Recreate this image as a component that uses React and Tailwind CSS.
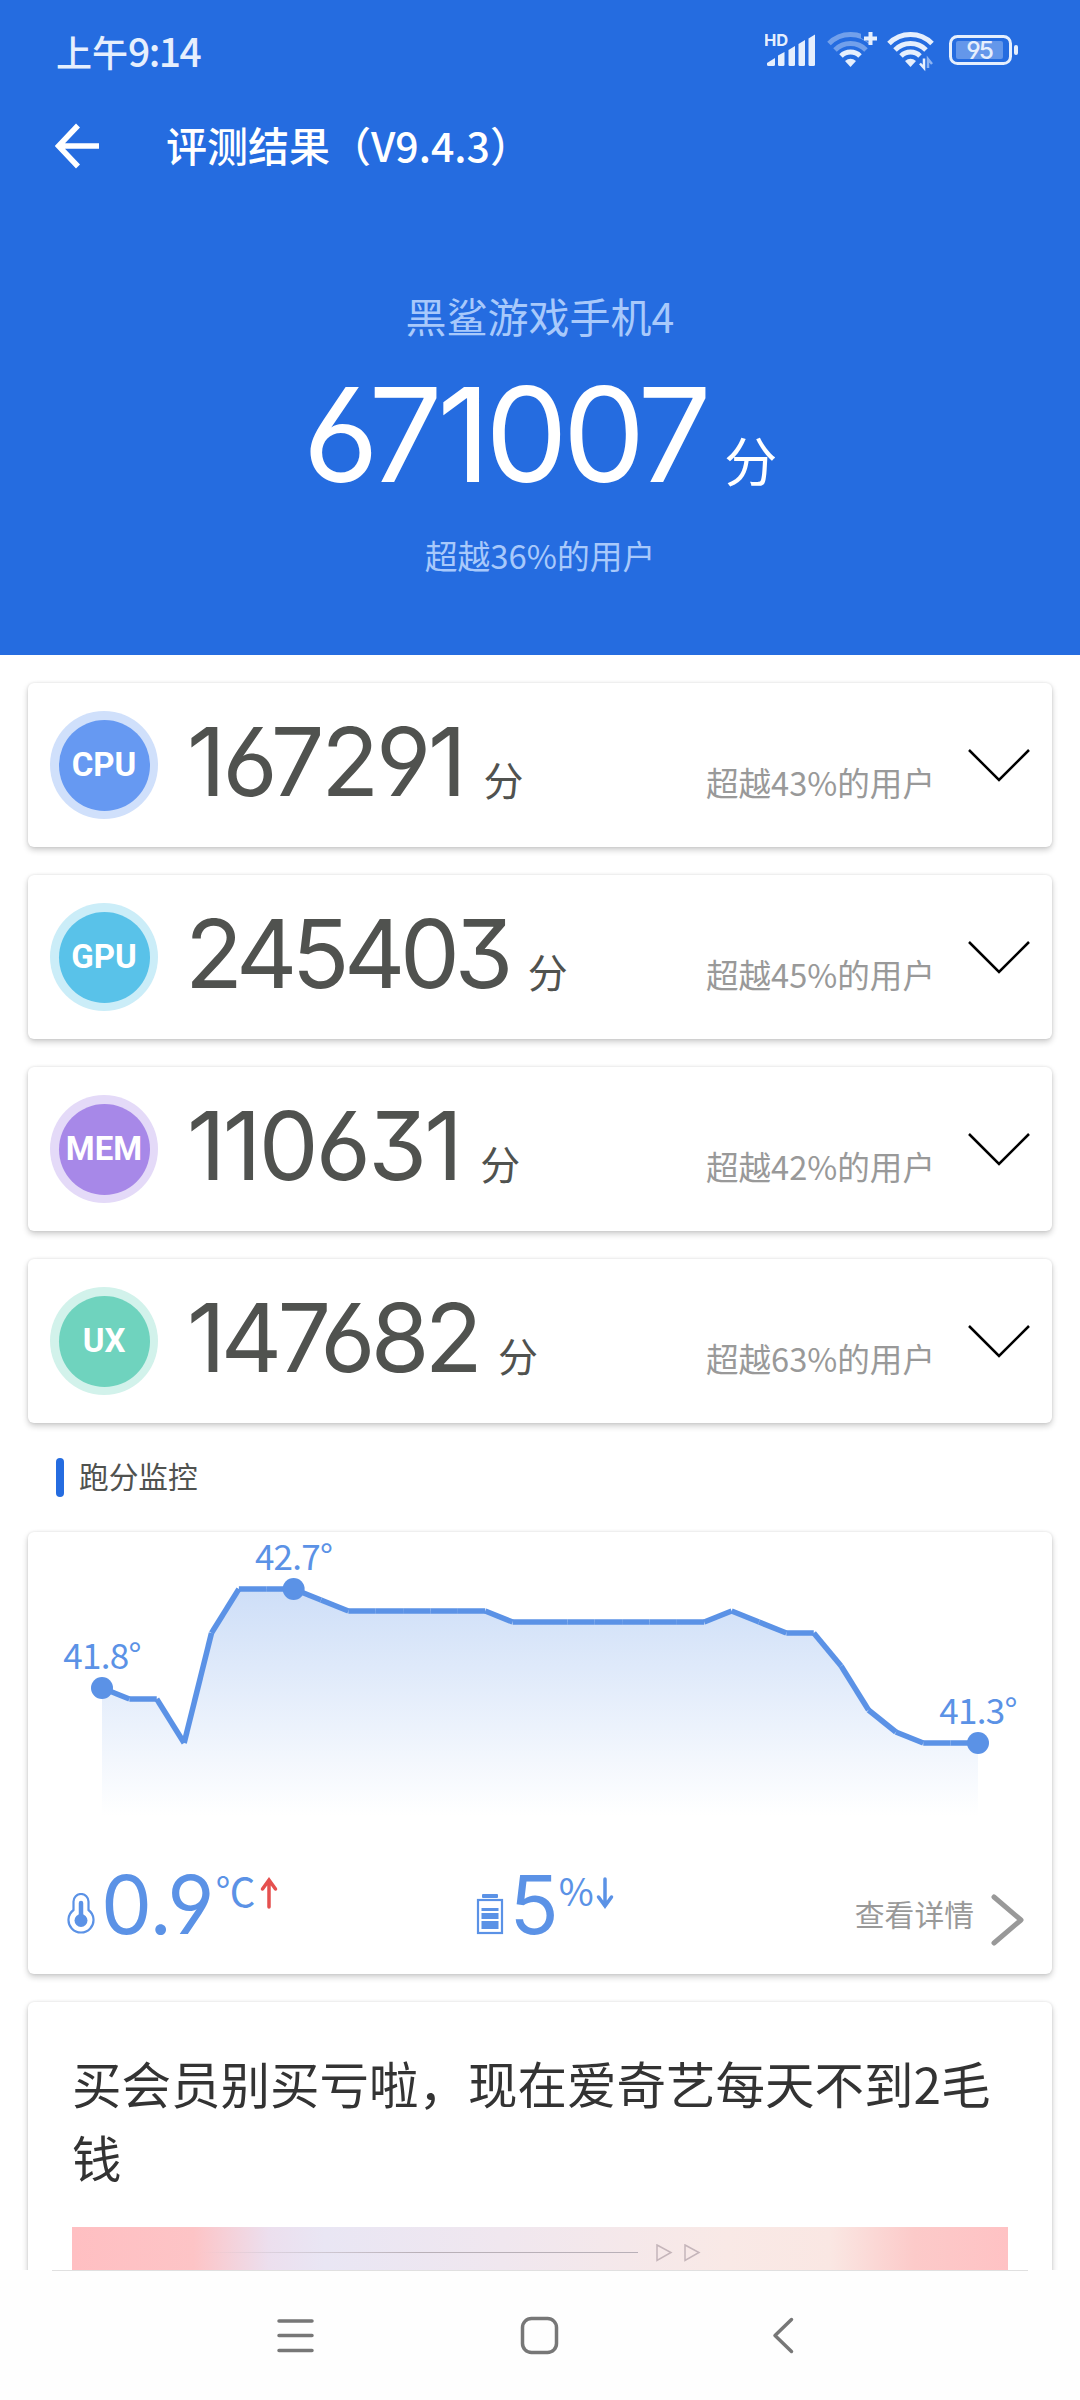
const temps = [
  41.8, 41.7, 41.7, 41.3, 42.3, 42.7, 42.7, 42.7, 42.6, 42.5, 42.5, 42.5, 42.5, 42.5, 42.5, 42.4, 42.4,
  42.4, 42.4, 42.4, 42.4, 42.4, 42.4, 42.5, 42.4, 42.3, 42.3, 42.0, 41.6, 41.4, 41.3, 41.3, 41.3,
];

const scores = [
  { label: 'CPU', score: 167291, percent: 43, ring: 'bg-[#d0e0fb]', fill: 'bg-[#6699f2]', spacing: 'tracking-[-3.2px]' },
  { label: 'GPU', score: 245403, percent: 45, ring: 'bg-[#cbedf8]', fill: 'bg-[#59c2e9]', spacing: 'tracking-[-5.5px] -ml-[2px]' },
  { label: 'MEM', score: 110631, percent: 42, ring: 'bg-[#e4daf8]', fill: 'bg-[#a788e8]', spacing: 'tracking-[-2.8px]' },
  { label: 'UX', score: 147682, percent: 63, ring: 'bg-[#d2f2eb]', fill: 'bg-[#6fd3be]', spacing: 'tracking-[-4.8px]' },
];

// Inter with the open 6 / 9 and the flat-top 3
const digitFont = "font-['Inter','Noto_Sans_CJK_SC',sans-serif] [font-feature-settings:'cv03','cv04','cv09']";

const Card = ({ className = '', children }) => (
  <div className={`mx-7 rounded-md bg-white shadow-[0_3px_6px_rgba(0,0,0,0.2),0_0_3px_rgba(0,0,0,0.1)] ${className}`}>
    {children}
  </div>
);

const Wifi = ({ x, dim }) => (
  <g transform={`translate(${x} 0)`} fill="none" stroke="#e6effd" strokeWidth="5">
    <path d="M-21.5 19.500 A30 30 0 0 1 21.500 19.500" opacity={dim ? 0.4 : 1} />
    <path d="M-15.500 26 A22 22 0 0 1 15.500 26" opacity={dim ? 0.4 : 1} />
    <path d="M-9.500 32 A13.500 13.500 0 0 1 9.500 32" />
    <path d="M-5.500 37 Q0 32.500 5.500 37 L0 43 Z" fill="#e6effd" stroke="none" />
  </g>
);

const StatusIcons = () => (
  <svg width="256" height="52" viewBox="0 0 256 52">
    <text x="-1" y="22" fill="#e6effd" className="font-['Inter',sans-serif] text-[16.5px] font-bold">HD</text>
    <g fill="#e6effd">
      <path d="M2 39 L10 34 V40.500 Q10 42 8.500 42 H3.500 Q2 42 2 40.500 Z" />
      <path d="M13 31.500 L19.500 28 V40.500 Q19.500 42 18 42 H14.500 Q13 42 13 40.500 Z" />
      <path d="M23.500 26 L30 22 V40.500 Q30 42 28.500 42 H25 Q23.500 42 23.500 40.500 Z" />
      <path d="M33.500 20 L40 16 V40.500 Q40 42 38.500 42 H35 Q33.500 42 33.500 40.500 Z" />
      <path d="M43.500 14.500 L50 10.500 V40.500 Q50 42 48.500 42 H45 Q43.500 42 43.500 40.500 Z" />
    </g>
    <Wifi x={85.5} dim />
    <path d="M96 8 H116 V25 L96 14 Z" fill="#256ce0" />
    <path d="M105.500 8 V21 M99 14.500 H112" stroke="#e6effd" strokeWidth="4" />
    <Wifi x={145.5} />
    <path d="M152 46 V34 H170 V46 Z" fill="#256ce0" />
    <path d="M159 34.500 V44 L155 39.500" fill="none" stroke="#e6effd" strokeWidth="2.500" />
    <path d="M163 44 V35 L167 40" fill="none" stroke="#8db4f2" strokeWidth="2.500" />
    <rect x="185.500" y="12.500" width="60" height="27" rx="7" fill="none" stroke="#e6effd" strokeWidth="3" />
    <rect x="191" y="17" width="47" height="18" rx="2" fill="#6497ea" />
    <rect x="249" y="21" width="4" height="10" rx="2" fill="#e6effd" />
    <text x="214" y="35" textAnchor="middle" fill="#e6effd" className="font-['Inter',sans-serif] text-[24.5px] font-medium tracking-[-2px] [font-feature-settings:'cv04']">95</text>
  </svg>
);

const ScoreCard = ({ item }) => (
  <Card className="flex h-[164px] items-center pl-[22px] pr-[21px]">
    <div className={`flex size-[108px] shrink-0 items-center justify-center rounded-full ${item.ring}`}>
      <div className={`flex size-[91px] items-center justify-center rounded-full font-['Roboto',sans-serif] text-[33px] font-bold text-white ${item.fill}`}>
        {item.label}
      </div>
    </div>
    <div className="ml-[29px] mt-[31px] flex flex-1 items-baseline self-start leading-none text-[#50524f]">
      <span className={`text-[95px] font-[370] ${item.spacing} ${digitFont}`}>{item.score}</span>
      <span className="ml-5 text-[40px]">分</span>
      <span className="ml-auto text-[32.6px] text-[#999]">超越{item.percent}%的用户</span>
    </div>
    <svg className="ml-[32px]" width="64" height="34" viewBox="0 0 64 34" fill="none" stroke="#000" strokeWidth="2.500">
      <path d="M2 2 L32 32 L62 2" />
    </svg>
  </Card>
);

const TempChart = () => {
  const points = temps.map((t, i) => [74 + i * 27.375, 156 - (t - 41.8) * 110]);
  const line = points.map(([x, y]) => `${x} ${y}`).join(' L');
  const marks = [
    { i: 0, label: '41.8°' },
    { i: 7, label: '42.7°' },
    { i: 32, label: '41.3°' },
  ];

  return (
    <svg className="block" width="1024" height="300" viewBox="0 0 1024 300">
      <defs>
        <linearGradient id="tempFill" x1="0" y1="57" x2="0" y2="284" gradientUnits="userSpaceOnUse">
          <stop offset="0" stopColor="#5b92e6" stopOpacity="0.3" />
          <stop offset="1" stopColor="#5b92e6" stopOpacity="0" />
        </linearGradient>
      </defs>
      <path d={`M${line} L950 284 L74 284 Z`} fill="url(#tempFill)" />
      {points.slice(1).map(([x, y], i) => (
        <line key={i} x1={points[i][0]} y1={points[i][1]} x2={x} y2={y} stroke="#5b92e6" strokeWidth="5.500" />
      ))}
      {marks.map(({ i, label }) => (
        <g key={i} fill="#5b92e6">
          <circle cx={points[i][0]} cy={points[i][1]} r="11" />
          <text x={points[i][0]} y={points[i][1] - 19} textAnchor="middle" className="text-[35px] tracking-[-0.7px]">
            {label}
          </text>
        </g>
      ))}
    </svg>
  );
};

const ThermometerIcon = () => (
  <svg className="mb-[17px]" width="28" height="42" viewBox="0 0 28 42" fill="none" stroke="#5b92e6" strokeWidth="2.200">
    <path d="M6.500 17 V8.500 A7.500 7.500 0 0 1 21.500 8.500 V17 A12.500 12.500 0 1 1 6.500 17 Z" />
    <circle cx="14" cy="27.500" r="6.500" fill="#5b92e6" stroke="none" />
    <path d="M14 10 V24" strokeWidth="4.500" strokeLinecap="round" />
  </svg>
);

const BatteryIcon = () => (
  <svg className="mb-[17px] ml-[198px]" width="28" height="42" viewBox="0 0 28 42" fill="#5b92e6">
    <rect x="6" y="1" width="16" height="4" rx="1" />
    <rect x="2" y="7" width="24" height="33" fill="none" stroke="#5b92e6" strokeWidth="2.200" />
    <rect x="5.500" y="15" width="17" height="3" />
    <rect x="5.500" y="20" width="17" height="6" />
    <rect x="5.500" y="28" width="17" height="8" />
  </svg>
);

const App = () => {
  return (
    <div className="flex h-[2400px] w-[1080px] flex-col overflow-hidden bg-white font-['Noto_Sans_CJK_SC',sans-serif]">
      {/* Header */}
      <header className="flex h-[655px] shrink-0 flex-col bg-[#256ce0] text-white">
        <div className="flex h-[100px] items-center justify-between pl-14 pr-[59px] leading-none">
          <span className="text-[36px] font-medium text-[#e6effd]">
            上午<span className="text-[39px] tracking-[-1.5px]">9:14</span>
          </span>
          <StatusIcons />
        </div>
        <div className="flex h-[88px] items-center pl-[55px] leading-none">
          <svg className="mt-1" width="46" height="46" viewBox="0 0 46 46" fill="none" stroke="#fff" strokeWidth="5.500">
            <path d="M23 2.500 L3.500 23 L23 43.500 M3.500 23 H44" />
          </svg>
          <h1 className="ml-[65px] text-[41px] font-medium">评测结果（V9.4.3）</h1>
        </div>
        <p className="mt-[107px] text-center text-[41px] leading-none text-[#a8c9fb]">黑鲨游戏手机4</p>
        <div className="mt-[33px] flex items-baseline justify-center leading-none">
          <span className={`text-[131px] font-[370] tracking-[-5.3px] ${digitFont}`}>671007</span>
          <span className="ml-[18px] text-[53px]">分</span>
        </div>
        <p className="mt-[39px] text-center text-[32.8px] leading-none text-[#a8c9fb]">超越36%的用户</p>
      </header>

      <main className="h-[1615px] shrink-0 overflow-hidden">
        {/* Score cards */}
        <div className="flex flex-col gap-7 pt-7">
          {scores.map((item) => (
            <ScoreCard key={item.label} item={item} />
          ))}
        </div>

        {/* Monitor */}
        <div className="mt-[35px] flex h-[39px] items-center pl-14">
          <span className="h-[39px] w-2 rounded-full bg-[#256ce0]" />
          <h2 className="-mt-1 ml-[15px] text-[29.7px] leading-none text-[#50524f]">跑分监控</h2>
        </div>
        <Card className="mt-[35px] h-[442px]">
          <TempChart />
          <div className="flex h-[120px] items-end pl-[39px] pr-7 leading-none text-[#5b92e6]">
            <ThermometerIcon />
            <span className={`mb-[6px] ml-[6px] text-[81px] tracking-[-1px] ${digitFont}`}>0.9</span>
            <span className="mb-[42px] ml-0.5 text-[40px]">℃</span>
            <svg className="mb-[43px] ml-[5px]" width="18" height="32" viewBox="0 0 18 32" fill="none" stroke="#e5504f" strokeWidth="3.500" strokeLinecap="round">
              <path d="M9 30 V3 M2.500 12 L9 3 L15.500 12" />
            </svg>
            <BatteryIcon />
            <span className={`mb-[6px] ml-[5px] text-[81px] ${digitFont}`}>5</span>
            <span className="mb-[43px] text-[38px]">%</span>
            <svg className="mb-[43px] ml-0.5" width="18" height="32" viewBox="0 0 18 32" fill="none" stroke="#5b92e6" strokeWidth="3.500" strokeLinecap="round">
              <path d="M9 2 V29 M2.500 20 L9 29 L15.500 20" />
            </svg>
            <span className="mb-[23px] ml-auto text-[29.8px] text-[#999]">查看详情</span>
            <svg className="mb-[5px] ml-4" width="34" height="54" viewBox="0 0 34 54" fill="none" stroke="#999" strokeWidth="5" strokeLinecap="round" strokeLinejoin="round">
              <path d="M4 4 L31 27 L4 50" />
            </svg>
          </div>
        </Card>

        {/* Ad */}
        <Card className="mt-7 h-[420px] px-11 pt-11">
          <p className="-mr-2 text-[49.5px] leading-[74px] text-[#333]">买会员别买亏啦，现在爱奇艺每天不到2毛钱</p>
          <div className="mt-[33px] flex h-[200px] items-start bg-[linear-gradient(90deg,#ffbfc2_0%,#fdc4c6_13%,#ecdfee_21%,#e9e6f4_27%,#f0e7ef_46%,#f9e9e6_70%,#fae7e3_81%,#fccac9_90%,#ffc2c4_100%)] pl-[128px] pt-[17px]">
            <span className="mt-2 h-px w-[438px] bg-linear-to-r from-transparent via-[#b9b0b8] to-[#b9b0b8]" />
            <svg className="ml-[18px]" width="46" height="18" viewBox="0 0 46 18" fill="none" stroke="#c5b5ba" strokeWidth="1.500">
              <path d="M1 1 L15 8.500 L1 16.500 Z M29 1 L43 8.500 L29 16.500 Z" />
            </svg>
          </div>
        </Card>
      </main>

      {/* System navigation */}
      <nav className="flex h-[130px] shrink-0 flex-col bg-[#fefefe]">
        <div className="mx-[52px] h-px bg-[#e0e0e0]" />
        <svg className="mt-[45px]" width="1080" height="40" viewBox="0 0 1080 40" fill="none" stroke="#777" strokeWidth="3.500" strokeLinecap="round" strokeLinejoin="round">
          <path d="M279 5 H312 M279 19.500 H312 M279 34.500 H312" />
          <rect x="522.500" y="2.500" width="34" height="34" rx="9" />
          <path d="M791.500 3.500 L775 19.500 L791.500 35.500" />
        </svg>
      </nav>
    </div>
  );
};

export default App;
